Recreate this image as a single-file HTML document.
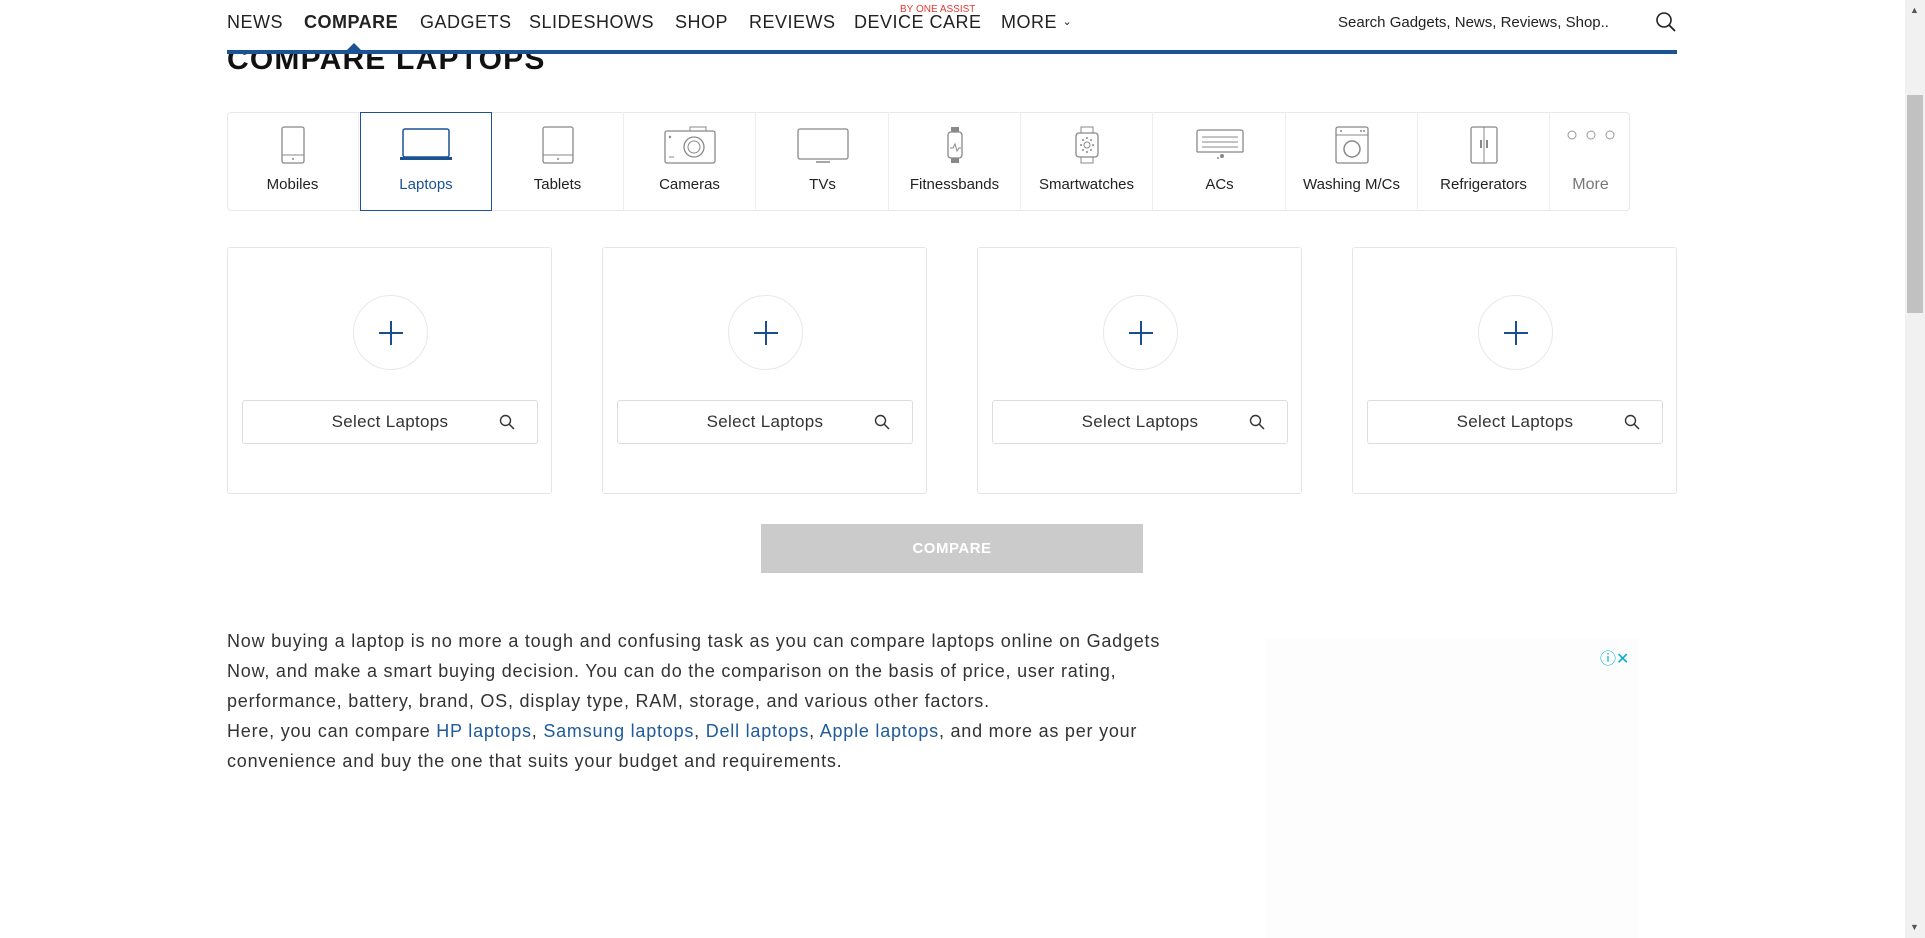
<!DOCTYPE html>
<html><head><meta charset="utf-8"><style>
*{margin:0;padding:0;box-sizing:border-box}
body{width:1925px;height:938px;overflow:hidden;background:#fff;font-family:"Liberation Sans",sans-serif;color:#222;position:relative}
.a{position:absolute;white-space:nowrap}
.nav{top:12px;font-size:18px;color:#222;letter-spacing:.5px}
.cat{position:absolute;top:112px;height:99px;width:132px;border-right:1px solid #eee;text-align:center}
.cat svg{position:absolute;left:50%;top:14px;transform:translateX(-50%)}
.cat span{position:absolute;left:0;right:0;top:64px;font-size:15px;color:#222}
.card{position:absolute;top:247px;width:325px;height:247px;border:1px solid #e6e6e6;border-radius:3px}
.circ{position:absolute;left:125px;top:47px;width:75px;height:75px;border:1px solid #e8e8e8;border-radius:50%}
.circ:before{content:"";position:absolute;left:25px;top:36px;width:24px;height:2px;background:#1a4f8e}
.circ:after{content:"";position:absolute;left:36px;top:25px;width:2px;height:24px;background:#1a4f8e}
.sel{position:absolute;left:14px;top:152px;width:296px;height:44px;border:1px solid #ddd;border-radius:3px;font-size:17px;color:#333;text-align:center;line-height:42px;letter-spacing:.3px}
.sel svg{position:absolute;right:22px;top:13px}
p{position:absolute;left:227px;top:626px;font-size:18px;line-height:30px;color:#333;letter-spacing:.78px;white-space:nowrap}
p a{color:#1f5a9b;text-decoration:none}
</style></head><body>
<div class="a nav" style="left:227px">NEWS</div>
<div class="a nav" style="left:304px;font-weight:bold">COMPARE</div>
<div class="a nav" style="left:420px">GADGETS</div>
<div class="a nav" style="left:529px">SLIDESHOWS</div>
<div class="a nav" style="left:675px">SHOP</div>
<div class="a nav" style="left:749px">REVIEWS</div>
<div class="a nav" style="left:854px">DEVICE CARE</div>
<div class="a" style="left:900px;top:4px;font-size:10px;color:#e53935">BY ONE ASSIST</div>
<div class="a nav" style="left:1001px">MORE <span style="font-size:11px;vertical-align:3px">&#8964;</span></div>
<div class="a" style="left:1338px;top:14px;font-size:15px;color:#222">Search Gadgets, News, Reviews, Shop..</div>
<svg class="a" style="left:1655px;top:11px" width="22" height="22" viewBox="0 0 22 22"><circle cx="9" cy="9" r="7" fill="none" stroke="#222" stroke-width="1.6"/><path d="M14 14l6 6" stroke="#222" stroke-width="1.8"/></svg>
<div class="a" style="left:227px;top:43px;font-size:30px;font-weight:bold;color:#111;letter-spacing:1.2px;clip-path:inset(11px 0 0 0)">COMPARE LAPTOPS</div>
<div class="a" style="left:227px;top:50px;width:1450px;height:4px;background:#1a5294"></div>
<div class="a" style="left:347px;top:43px;width:0;height:0;border-left:7px solid transparent;border-right:7px solid transparent;border-bottom:7px solid #1a5294"></div>

<div class="a" style="left:227px;top:112px;width:1403px;height:99px;border:1px solid #e8e8e8;border-radius:4px"></div>
<div class="cat" style="left:227px"><svg width="24" height="38"><rect x="1" y="1" width="22" height="36" rx="2" fill="none" stroke="#888" stroke-width="1.3"/><line x1="1" y1="29" x2="23" y2="29" stroke="#888"/><circle cx="12" cy="33" r="1" fill="#888"/></svg><span>Mobiles</span></div>
<div class="cat" style="left:360px;border:1px solid #1a5294"><svg width="52" height="36"><rect x="3" y="2" width="46" height="28" rx="2" fill="none" stroke="#1a5294" stroke-width="1.5"/><rect x="0" y="30" width="52" height="3" fill="#1a5294"/></svg><span style="color:#1a5294;top:63px">Laptops</span></div>
<div class="cat" style="left:492px"><svg width="32" height="38"><rect x="1" y="1" width="30" height="36" rx="2" fill="none" stroke="#888" stroke-width="1.3"/><line x1="1" y1="29" x2="31" y2="29" stroke="#888"/><circle cx="16" cy="33" r="1" fill="#888"/></svg><span>Tablets</span></div>
<div class="cat" style="left:624px"><svg width="52" height="38"><rect x="1" y="5" width="50" height="32" rx="2" fill="none" stroke="#888" stroke-width="1.3"/><rect x="26" y="1" width="16" height="4" fill="none" stroke="#888"/><circle cx="30" cy="21" r="10" fill="none" stroke="#888" stroke-width="1.3"/><circle cx="30" cy="21" r="6" fill="none" stroke="#888"/><circle cx="6" cy="11" r="1.2" fill="#888"/><line x1="5" y1="31" x2="10" y2="31" stroke="#888"/></svg><span>Cameras</span></div>
<div class="cat" style="left:757px"><svg width="52" height="38"><rect x="1" y="3" width="50" height="30" rx="2" fill="none" stroke="#888" stroke-width="1.3"/><line x1="19" y1="36" x2="33" y2="36" stroke="#888" stroke-width="1.5"/></svg><span>TVs</span></div>
<div class="cat" style="left:889px"><svg width="18" height="38"><rect x="2" y="6" width="14" height="26" rx="3" fill="none" stroke="#888" stroke-width="1.3"/><rect x="5" y="1" width="8" height="5" fill="#888"/><rect x="5" y="32" width="8" height="5" fill="#888"/><path d="M4 22h3l2-4 2 7 2-3h2" fill="none" stroke="#888"/></svg><span>Fitnessbands</span></div>
<div class="cat" style="left:1021px"><svg width="26" height="38"><rect x="2" y="7" width="22" height="24" rx="3" fill="none" stroke="#888" stroke-width="1.3"/><rect x="7" y="1" width="12" height="6" fill="none" stroke="#888"/><rect x="7" y="31" width="12" height="6" fill="none" stroke="#888"/><circle cx="13" cy="19" r="3" fill="none" stroke="#888"/><g fill="#888"><circle cx="13" cy="12" r="1"/><circle cx="13" cy="26" r="1"/><circle cx="7" cy="19" r="1"/><circle cx="19" cy="19" r="1"/><circle cx="9" cy="14" r="1"/><circle cx="17" cy="24" r="1"/><circle cx="17" cy="14" r="1"/><circle cx="9" cy="24" r="1"/></g></svg><span>Smartwatches</span></div>
<div class="cat" style="left:1154px"><svg width="48" height="38"><path d="M1 26V6a2 2 0 0 1 2-2h42a2 2 0 0 1 2 2v20" fill="none" stroke="#888" stroke-width="1.3"/><line x1="1" y1="26" x2="47" y2="26" stroke="#888" stroke-width="1.3"/><line x1="6" y1="11" x2="42" y2="11" stroke="#888"/><line x1="6" y1="16" x2="42" y2="16" stroke="#888"/><line x1="6" y1="21" x2="42" y2="21" stroke="#888"/><circle cx="22" cy="32" r="1" fill="#888"/><circle cx="26" cy="30" r="2" fill="#888"/></svg><span>ACs</span></div>
<div class="cat" style="left:1286px"><svg width="34" height="38"><rect x="1" y="1" width="32" height="36" rx="2" fill="none" stroke="#888" stroke-width="1.3"/><line x1="1" y1="9" x2="33" y2="9" stroke="#888"/><circle cx="17" cy="23" r="8" fill="none" stroke="#888" stroke-width="1.5"/><circle cx="6" cy="5" r="1" fill="#888"/><circle cx="26" cy="5" r="1" fill="#888"/><circle cx="29" cy="5" r="1" fill="#888"/></svg><span>Washing M/Cs</span></div>
<div class="cat" style="left:1418px"><svg width="28" height="38"><rect x="1" y="1" width="26" height="36" rx="2" fill="none" stroke="#888" stroke-width="1.3"/><line x1="14" y1="1" x2="14" y2="37" stroke="#888"/><rect x="10" y="14" width="2" height="8" fill="#888"/><rect x="16" y="14" width="2" height="8" fill="#888"/></svg><span>Refrigerators</span></div>
<div class="cat" style="left:1551px;width:79px;border-right:none"><svg width="50" height="12" style="top:17px"><circle cx="6" cy="6" r="4" fill="none" stroke="#999"/><circle cx="25" cy="6" r="4" fill="none" stroke="#999"/><circle cx="44" cy="6" r="4" fill="none" stroke="#999"/></svg><span style="color:#777;font-size:16px">More</span></div>

<div class="card" style="left:227px"><div class="circ"></div><div class="sel">Select Laptops<svg width="16" height="16"><circle cx="6.5" cy="6.5" r="5" fill="none" stroke="#333" stroke-width="1.4"/><path d="M10 10l5 5" stroke="#333" stroke-width="1.5"/></svg></div></div>
<div class="card" style="left:602px"><div class="circ"></div><div class="sel">Select Laptops<svg width="16" height="16"><circle cx="6.5" cy="6.5" r="5" fill="none" stroke="#333" stroke-width="1.4"/><path d="M10 10l5 5" stroke="#333" stroke-width="1.5"/></svg></div></div>
<div class="card" style="left:977px"><div class="circ"></div><div class="sel">Select Laptops<svg width="16" height="16"><circle cx="6.5" cy="6.5" r="5" fill="none" stroke="#333" stroke-width="1.4"/><path d="M10 10l5 5" stroke="#333" stroke-width="1.5"/></svg></div></div>
<div class="card" style="left:1352px"><div class="circ"></div><div class="sel">Select Laptops<svg width="16" height="16"><circle cx="6.5" cy="6.5" r="5" fill="none" stroke="#333" stroke-width="1.4"/><path d="M10 10l5 5" stroke="#333" stroke-width="1.5"/></svg></div></div>

<div class="a" style="left:761px;top:524px;width:382px;height:49px;background:#cbcbcb;color:#fff;font-size:15px;font-weight:bold;text-align:center;line-height:49px;letter-spacing:.5px">COMPARE</div>

<p>Now buying a laptop is no more a tough and confusing task as you can compare laptops online on Gadgets<br>Now, and make a smart buying decision. You can do the comparison on the basis of price, user rating,<br>performance, battery, brand, OS, display type, RAM, storage, and various other factors.<br>Here, you can compare <a>HP laptops</a>, <a>Samsung laptops</a>, <a>Dell laptops</a>, <a>Apple laptops</a>, and more as per your<br>convenience and buy the one that suits your budget and requirements.</p>

<div class="a" style="left:1265px;top:638px;width:374px;height:300px;background:#fdfdfd"></div>
<div class="a" style="left:1600px;top:645px;font-size:16px;color:#00aecd">&#9432;&#10005;</div>

<div class="a" style="left:1905px;top:0;width:20px;height:938px;background:#f1f1f1"></div>
<div class="a" style="left:1907px;top:95px;width:16px;height:218px;background:#c1c1c1"></div>
<div class="a" style="left:1910px;top:5px;font-size:9px;color:#555">&#9650;</div>
<div class="a" style="left:1910px;top:922px;font-size:9px;color:#555">&#9660;</div>
</body></html>
